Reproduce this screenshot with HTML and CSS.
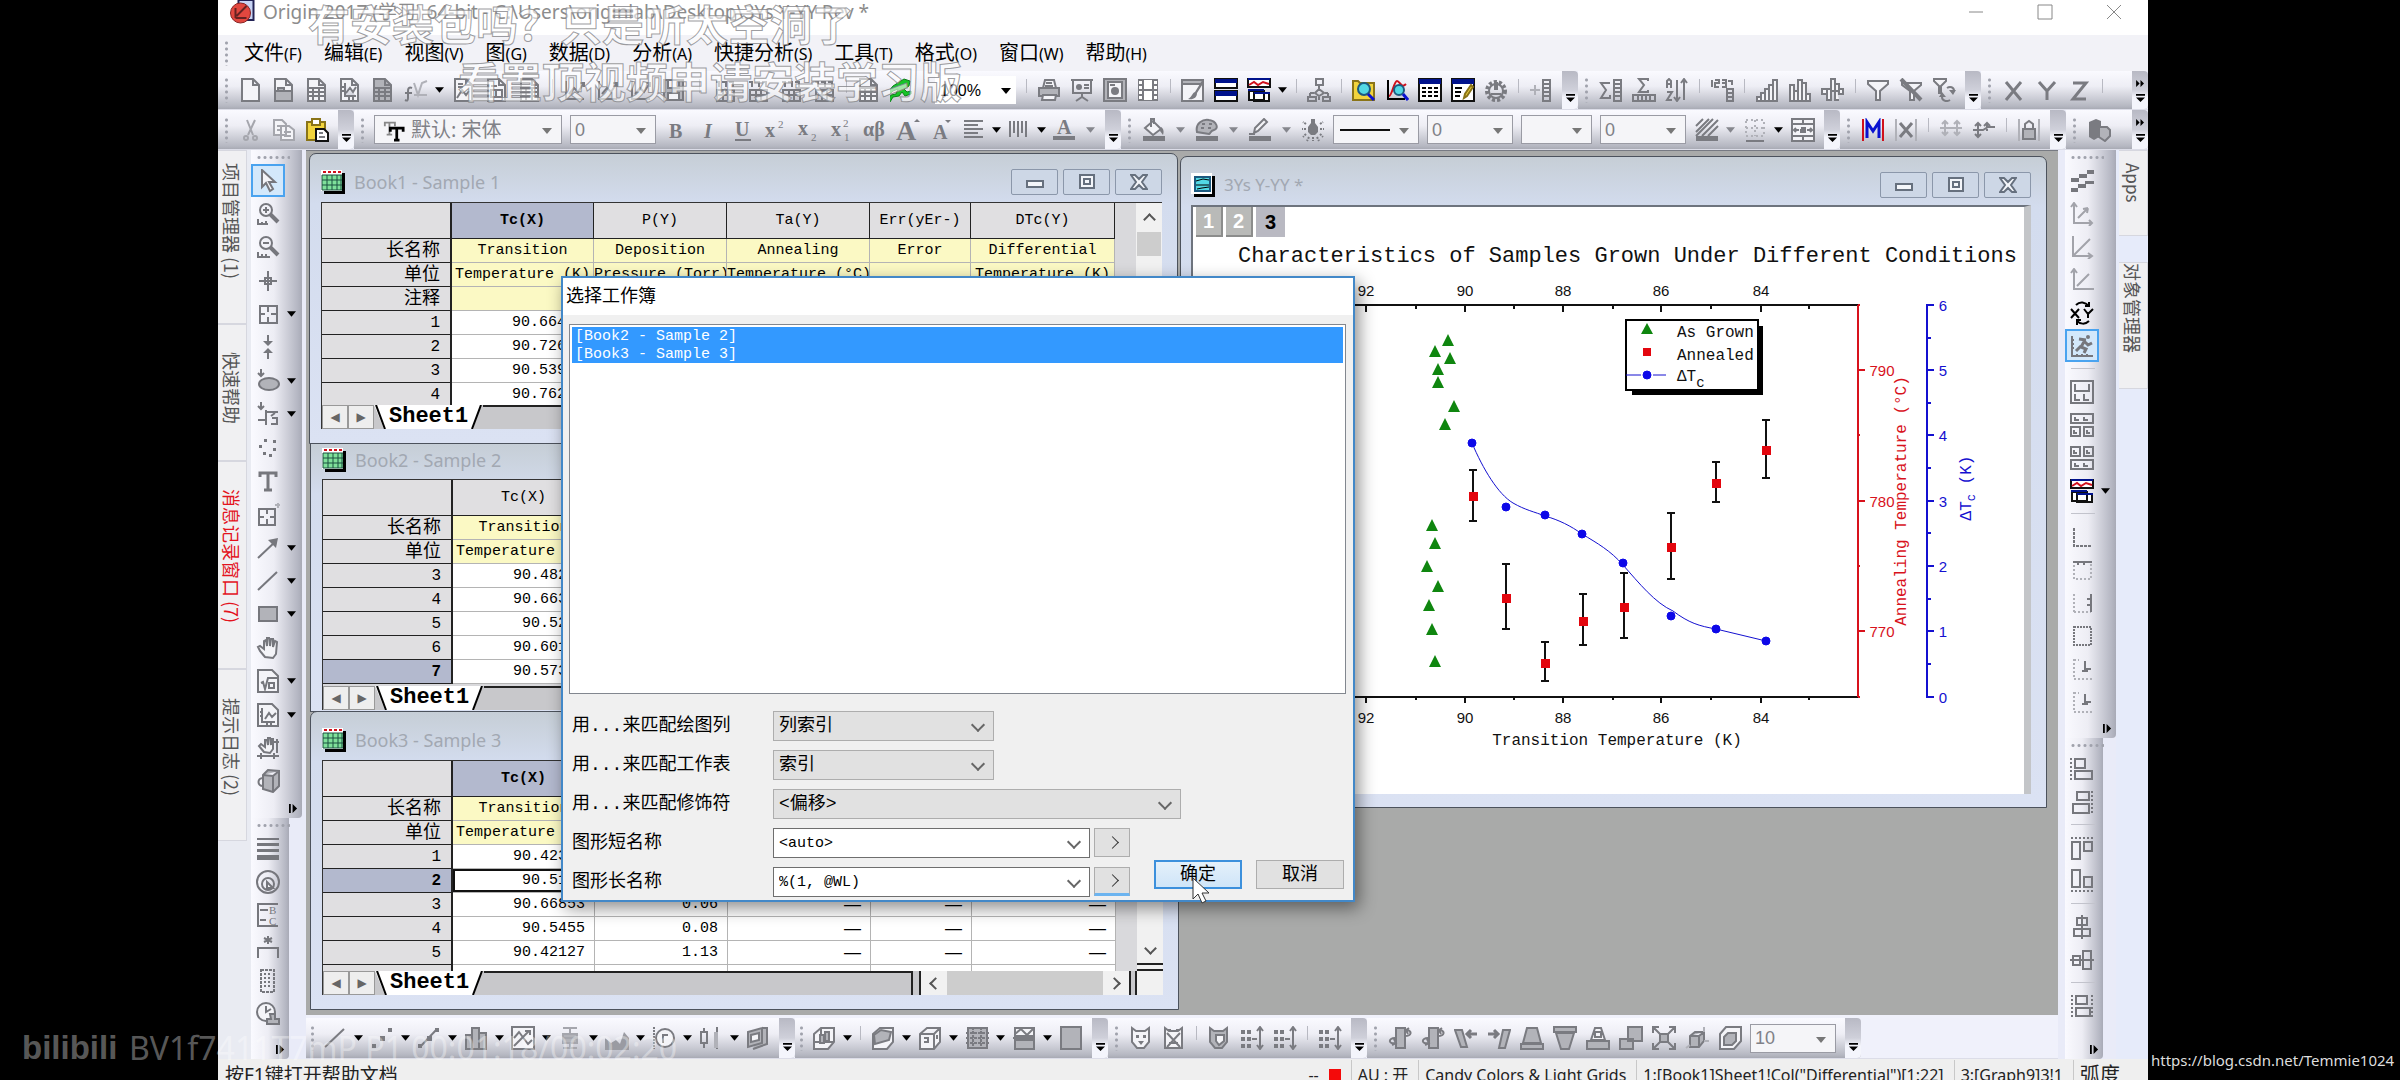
FILE: index.html
```html
<!DOCTYPE html>
<html lang="zh-CN">
<head>
<meta charset="utf-8">
<title>Origin 2017</title>
<link rel="stylesheet" href="styles.css">
</head>
<body>
<svg class="defs" aria-hidden="true">
<defs>
<symbol id="new" viewBox="0 0 24 24"><path class="w" d="M3 1h11l6 6v16H3zM14 1v6h6"/></symbol>
<symbol id="open" viewBox="0 0 24 24"><path class="w" d="M3 1h11l6 6v16H3zM14 1v6h6"/><path class="h" d="M3 13h17v10H3zM6 13v-3h6v3"/></symbol>
<symbol id="docgrid" viewBox="0 0 24 24"><path class="w" d="M3 1h11l6 6v16H3zM14 1v6h6M3 10h17M3 14h17M3 18h17M8 10v13M14 10v13"/></symbol>
<symbol id="docxls" viewBox="0 0 24 24"><path class="h" d="M3 1h11l6 6v16H3z"/><path d="M14 1v6h6M3 10h17M3 14h17M3 18h17M8 10v13M14 10v13"/></symbol>
<symbol id="docplot" viewBox="0 0 24 24"><path class="w" d="M3 1h11l6 6v16H3zM14 1v6h6M7 5v13h11M8 15l4-5 3 4 3-5M3 9h3M3 13h3M11 18v4M15 18v4"/></symbol>
<symbol id="func" viewBox="0 0 24 24"><path d="M8 10c-4-2-4 2-4 4v6c0 3-1 3-3 2M1 15h7"/><path class="l" d="M10 5l4 12 4-12 5-2M10 17h13"/></symbol>
<symbol id="docimg" viewBox="0 0 24 24"><path class="w" d="M3 1h11l6 6v16H3zM14 1v6h6M5 20l5-8 4 5 3-4M6 6h5M6 9h5"/></symbol>
<symbol id="docmulti" viewBox="0 0 24 24"><path class="w" d="M3 1h11l6 6v16H3zM14 1v6h6M6 12h11v7H6zM6 8h6M11 12v7"/></symbol>
<symbol id="save" viewBox="0 0 24 24"><path class="h" d="M2 2h19v20H2z"/><path class="w" d="M6 2h11v8H6zM6 15h11v7H6z"/></symbol>
<symbol id="chartimp" viewBox="0 0 24 24"><path d="M3 3v18h18M6 16l5-6 4 4 6-9M17 5h4v4"/></symbol>
<symbol id="nums" viewBox="0 0 24 24"><path d="M4 12h17v11H4zM4 17h17M10 12v11M15 12v11M3 4h3v5M9 4h4v5M16 4h4v5"/></symbol>
<symbol id="run" viewBox="0 0 24 24"><path class="g" d="M14 1l6 2-1 5-5 3 3 3 4-1v3l-6 2-3-4-3 4-6 1-3 5-2-2 3-5 5-1 2-5-5 2-3 3-2-2 5-6z"/></symbol>
<symbol id="print" viewBox="0 0 24 24"><path class="h" d="M2 10h20v8H2z"/><path class="w" d="M6 10l2-8h9l2 8zM6 17h13l-1 5H5z"/><path d="M9 5h6M8 8h8"/></symbol>
<symbol id="present" viewBox="0 0 24 24"><path d="M1 2h22M3 3v12h18V3M12 15v5M6 23l6-4 6 4M14 7h5M14 10h5"/><circle class="f" cx="9" cy="9" r="3"/></symbol>
<symbol id="docpie" viewBox="0 0 24 24"><path class="h" d="M1 1h22v22H1z"/><path class="w" d="M5 4h14v16H5z"/><circle class="f" cx="12" cy="13" r="4"/><path d="M7 7h5"/></symbol>
<symbol id="film" viewBox="0 0 24 24"><path class="f" d="M2 1h20v22H2z"/><path class="wf" d="M8 2h8v9H8zM8 13h8v9H8zM3 3h3v3H3zM3 8h3v3H3zM3 13h3v3H3zM3 18h3v3H3zM18 3h3v3h-3zM18 8h3v3h-3zM18 13h3v3h-3zM18 18h3v3h-3z"/></symbol>
<symbol id="brush" viewBox="0 0 24 24"><path class="w" d="M1 2h21v21H1z"/><path class="h" d="M1 2h21v4H1z"/><path class="f" d="M22 1l-8 13c-3 1-3 5-7 7 5 1 9-1 9-6l7-11z"/></symbol>
<symbol id="split" viewBox="0 0 24 24"><path class="wk" d="M1 1h22v9H1zM1 13h22v10H1z"/><path class="bf" d="M1 1h22v4H1zM1 13h22v5H1z"/></symbol>
<symbol id="cascade" viewBox="0 0 24 24"><path class="wk" d="M1 1h22v8H1zM2 13h15v9H2zM7 15h15v8H7z"/><path class="bf" d="M1 0h22v2H1zM1 11h16v2H1zM7 14h16v2H7z"/><path class="r" d="M2 7l5-3 4 3 5-3 6 2"/></symbol>
<symbol id="tree" viewBox="0 0 24 24"><path d="M9 1h7v6H9zM12 7v4M8 15l4-4 5 4-5 3zM3 15h4M18 15h3M3 15v4M21 15v4M1 19h8v4H1zM16 19h7v4h-7zM12 18v4"/></symbol>
<symbol id="findfile" viewBox="0 0 24 24"><path class="y" d="M1 3h5l2 2h14v17H1z"/><circle class="c" cx="12" cy="11" r="6"/><path class="b" d="M16 16l6 6"/></symbol>
<symbol id="findplot" viewBox="0 0 24 24"><path class="k" d="M3 2v19h17"/><path class="r" d="M4 18c3 0 5-15 8-15s4 8 9 3"/><circle class="c" cx="14" cy="12" r="5"/><path class="b" d="M18 16l5 6"/></symbol>
<symbol id="tablewin" viewBox="0 0 24 24"><path class="wk" d="M1 1h22v22H1z"/><path class="bf" d="M1 1h22v5H1z"/><path class="k" d="M4 10h4M10 10h4M16 10h4M4 14h4M10 14h4M16 14h4M4 18h4M10 18h4M16 18h4"/></symbol>
<symbol id="notewin" viewBox="0 0 24 24"><path class="wk" d="M1 1h22v22H1z"/><path class="bf" d="M1 1h22v5H1z"/><path class="k" d="M4 10h7M4 14h6M4 18h5"/><path class="y" d="M13 20l1-4 6-9 2 2-6 9z"/></symbol>
<symbol id="gear" viewBox="0 0 24 24"><circle cx="12" cy="13" r="9" stroke-width="4" stroke-dasharray="3 2"/><circle cx="12" cy="13" r="7"/><path class="f" d="M10 4h4v8h-4z"/><path d="M7 16h10"/></symbol>
<symbol id="addcol" viewBox="0 0 24 24"><path class="l" d="M1 12h10M6 7v10"/><path d="M14 2h7v21h-7zM14 6h7M14 10h7M14 14h7M14 18h7"/></symbol>
<symbol id="sumcol" viewBox="0 0 24 24"><path d="M11 5H2l5 7-5 8h9v-3M15 2h7v21h-7zM15 6h7M15 10h7M15 14h7M15 18h7"/></symbol>
<symbol id="sumrow" viewBox="0 0 24 24"><path d="M16 3V1H7l5 6-5 7h9v-2M1 17h22v6H1zM6 17v6M10 17v6M14 17v6M18 17v6"/></symbol>
<symbol id="sort" viewBox="0 0 24 24"><path d="M2 10V3l2-2 2 2v7M2 6h4M2 14h5l-5 8h5M12 2v20M9 19l3 4 3-4M19 22V2M16 5l3-4 3 4"/></symbol>
<symbol id="setnum" viewBox="0 0 24 24"><path d="M2 2v7M5 2h4v3H5v4h4M12 2h4v7h-4M12 5h3M18 3h4v4M17 11h6v12h-6zM17 15h6M17 19h6"/></symbol>
<symbol id="bars1" viewBox="0 0 24 24"><path class="w" d="M2 19h4v4H2zM6 15h4v8H6zM10 11h4v12h-4zM14 7h4v16h-4zM18 2h4v21h-4z"/></symbol>
<symbol id="bars2" viewBox="0 0 24 24"><path class="w" d="M2 7h4v16H2zM6 13h4v10H6zM10 2h4v21h-4zM14 5h4v18h-4zM18 16h4v7h-4z"/></symbol>
<symbol id="bars3" viewBox="0 0 24 24"><path class="w" d="M1 11h5v5H1zM6 11h4v11H6zM10 1h4v12h-4zM14 6h4v7h-4v9h4M18 11h4v5h-4z"/></symbol>
<symbol id="filter" viewBox="0 0 24 24"><path class="w" d="M2 3h20v3l-8 7v9h-4v-9L2 6z"/></symbol>
<symbol id="nofilter" viewBox="0 0 24 24"><path class="w" d="M3 5h19v2l-7 6v9h-4v-9L3 7z"/><path stroke-width="4" d="M2 1l20 21"/></symbol>
<symbol id="refilter" viewBox="0 0 24 24"><path class="w" d="M2 1h12v2L9 8v7H7V8L2 3z"/><path d="M22 13c0-4-4-5-7-3M10 19c0 4 5 5 8 3"/><path class="f" d="M17 12h7l-3 5zM7 19h7l-4-5z"/></symbol>
<symbol id="ex" viewBox="0 0 24 24"><path stroke-width="3" d="M4 4l15 18M19 4L4 22"/></symbol>
<symbol id="why" viewBox="0 0 24 24"><path stroke-width="3" d="M4 4l8 9 8-9M12 13v9"/></symbol>
<symbol id="zed" viewBox="0 0 24 24"><path stroke-width="3" d="M5 5h13L5 21h13"/></symbol>
<symbol id="cut" viewBox="0 0 24 24"><path d="M8 2l6 15M16 2L9 17"/><circle cx="7" cy="20" r="2"/><circle cx="16" cy="20" r="2"/></symbol>
<symbol id="copy" viewBox="0 0 24 24"><path class="w" d="M2 2h8l4 4v11H2zM9 8h8l5 4v10H9zM12 14h7M12 18h7M5 8h3M5 12h3"/></symbol>
<symbol id="paste" viewBox="0 0 24 24"><path class="y" d="M2 4h18v18H2z"/><path class="ybox" d="M7 1h8v6H7z"/><path class="wk" d="M11 11h8l4 4v8H11z"/><path d="M14 15h4M14 19h6"/></symbol>
<symbol id="bold" viewBox="0 0 24 24"><text class="ic fb" x="4" y="20">B</text></symbol>
<symbol id="ital" viewBox="0 0 24 24"><text class="ic fi" x="6" y="20">I</text></symbol>
<symbol id="undl" viewBox="0 0 24 24"><text class="ic fb" x="4" y="18">U</text><path d="M4 22h16"/></symbol>
<symbol id="sup" viewBox="0 0 24 24"><text class="ic fb" x="1" y="19">x</text><text class="ic s" x="14" y="10">2</text></symbol>
<symbol id="sub" viewBox="0 0 24 24"><text class="ic fb" x="1" y="17">x</text><text class="ic s" x="14" y="23">2</text></symbol>
<symbol id="supsub" viewBox="0 0 24 24"><text class="ic fb" x="1" y="18">x</text><text class="ic s" x="13" y="9">2</text><text class="ic s" x="14" y="23">1</text></symbol>
<symbol id="alpha" viewBox="0 0 24 24"><text class="ic fb" x="0" y="18">αβ</text></symbol>
<symbol id="bigA" viewBox="0 0 24 24"><text class="ic xl" x="0" y="22">A</text><path class="f" d="M18 4l3-3 3 3z"/></symbol>
<symbol id="smallA" viewBox="0 0 24 24"><text class="ic fb" x="4" y="21">A</text><path class="f" d="M16 2h6l-3 3z"/></symbol>
<symbol id="align" viewBox="0 0 24 24"><path d="M2 3h19M2 7h14M2 11h19M2 15h14M2 19h19"/></symbol>
<symbol id="vlines" viewBox="0 0 24 24"><path d="M3 3v16M7 3v12M11 3v16M15 3v12M19 3v16"/></symbol>
<symbol id="colorA" viewBox="0 0 24 24"><text class="ic fb" x="5" y="16">A</text><path class="f" d="M1 18h22v4H1z"/></symbol>
<symbol id="bucket" viewBox="0 0 24 24"><path class="w" d="M3 10l8-7 8 8-8 6zM9 9V1h3v5"/><path class="f" d="M19 9c3 2 3 5 2 8l-3-4zM1 18h22v5H1z"/></symbol>
<symbol id="palette" viewBox="0 0 24 24"><path class="h" d="M2 14C0 5 8 1 14 2c8 1 10 9 5 10-4 1-3 3-5 4z"/><path d="M7 6h3M14 6h3M6 10h3M13 10h3"/><path class="f" d="M1 18h22v5H1z"/></symbol>
<symbol id="pen" viewBox="0 0 24 24"><path class="w" d="M6 15l1-5 9-9 3 3-9 9zM1 16h6"/><path class="f" d="M1 18h22v5H1z"/></symbol>
<symbol id="bulb" viewBox="0 0 24 24"><path class="f" d="M10 1h4v4l3 4v5l-3 3h-4l-3-3V9l3-4z"/><path stroke-dasharray="2 1" d="M5 11H1M19 11h4M5 6L2 4M19 6l3-2M5 16l-3 3M19 16l3 3M12 19v4M8 19l-2 4M16 19l2 4"/></symbol>
<symbol id="hatch" viewBox="0 0 24 24"><path d="M1 8l7-7M1 14L14 1M1 18L18 1M7 18L23 2M13 18L23 8"/><path class="f" d="M1 18h22v5H1z"/></symbol>
<symbol id="border" viewBox="0 0 24 24"><path class="l" stroke-dasharray="2 3" d="M3 2h18v16H3zM12 2v16M3 10h18"/><path d="M3 23h18"/></symbol>
<symbol id="merge" viewBox="0 0 24 24"><path class="w" d="M1 1h22v22H1zM1 6h22M1 18h22M12 1v5M12 18v5M3 12h5M16 12h5M5 10l-2 2 2 2M19 10l2 2-2 2M10 10h4v4h-4v-2h4"/></symbol>
<symbol id="mask" viewBox="0 0 24 24"><path class="r" d="M2 1v22M22 1v22"/><path class="b" d="M6 20V4l6 9 6-9v16"/></symbol>
<symbol id="unmask" viewBox="0 0 24 24"><path class="l" d="M2 1v22M22 1v22"/><path stroke-width="3" d="M6 5l12 14M18 5L6 19"/></symbol>
<symbol id="swap" viewBox="0 0 24 24"><path class="l" d="M6 3v14M3 6l3-3 3 3M3 14l3 3 3-3M1 10h22M18 3v14M15 6l3-3 3 3M15 14l3 3 3-3"/></symbol>
<symbol id="swap2" viewBox="0 0 24 24"><path d="M6 5v14M3 8l3-3 3 3M3 16l3 3 3-3M1 12h10l5-3h7M15 6v7M12 8l3-3 3 3"/></symbol>
<symbol id="lock" viewBox="0 0 24 24"><path class="l" d="M2 1v22M22 1v22"/><path class="h" d="M6 11h12v10H6z"/><path d="M8 11V6l4-3 4 3v5"/></symbol>
<symbol id="cubes" viewBox="0 0 24 24"><path class="f" d="M2 4l7-3 5 2v15l-7 4-5-3z"/><path class="h" d="M12 9h8l3 3v6l-5 5-6-4z"/></symbol>
<symbol id="arrow" viewBox="0 0 24 24"><path class="w" d="M6 1v17l4-4 4 8 3-2-4-7h6z"/></symbol>
<symbol id="zin" viewBox="0 0 24 24"><circle cx="10" cy="8" r="6"/><path d="M7 8h6M10 5v6M2 17v5h10M6 20v2M10 19v3"/><path stroke-width="4" d="M14 12l8 8"/></symbol>
<symbol id="zout" viewBox="0 0 24 24"><circle cx="10" cy="8" r="6"/><path d="M7 8h6M2 17v5h12M6 19v3M10 19v3"/><path stroke-width="4" d="M14 12l8 8"/></symbol>
<symbol id="cross" viewBox="0 0 24 24"><path d="M12 2v20M3 12h18M9 9h6v6H9z"/></symbol>
<symbol id="screen" viewBox="0 0 24 24"><path d="M4 4h17v17H4zM12 4v6M12 15v6M4 12h5M15 12h6"/></symbol>
<symbol id="dsel" viewBox="0 0 24 24"><path d="M12 0v8M12 24v-8"/><path class="f" d="M7 6h10l-5 5zM7 18h10l-5-5z"/></symbol>
<symbol id="oval" viewBox="0 0 24 24"><path d="M5 0v6M2 4l3 3 3-3"/><ellipse class="h" cx="13" cy="15" rx="10" ry="6"/></symbol>
<symbol id="reg" viewBox="0 0 24 24"><path d="M5 0v6M2 4l3 3 3-3M10 8v15M2 18h8M10 10h12M15 14l4-3M15 22h6v-6h-5"/></symbol>
<symbol id="dots" viewBox="0 0 24 24"><path class="f" d="M8 3h3v3H8zM3 9h3v3H3zM17 4h3v3h-3zM17 12h3v3h-3zM7 16h3v3H7zM13 18h3v3h-3z"/></symbol>
<symbol id="tee" viewBox="0 0 24 24"><path stroke-width="3" d="M4 8V4h16v4M12 4v17M8 21h8"/></symbol>
<symbol id="annot" viewBox="0 0 24 24"><path d="M3 7h16v16H3zM11 7v5M11 17v6M3 15h5M14 15h5"/><path class="l" d="M22 1v5M19 3h5"/></symbol>
<symbol id="arr" viewBox="0 0 24 24"><path d="M2 22L20 5"/><path class="f" d="M12 4l10-2-2 10z"/></symbol>
<symbol id="line" viewBox="0 0 24 24"><path d="M2 21L21 3"/></symbol>
<symbol id="rect" viewBox="0 0 24 24"><path class="h" d="M3 5h18v14H3z"/></symbol>
<symbol id="hand" viewBox="0 0 24 24"><path class="w" d="M9 21l-5-6-2-4 2-1 4 3V5l2-1 1 6V2h2l1 8 1-7h2v8l2-6 2 1-1 12-3 4z"/></symbol>
<symbol id="sqrt" viewBox="0 0 24 24"><path class="w" d="M2 1h14l6 6v16H2z"/><path d="M5 14l2-1 2 7 3-11h9M13 14h5v5h-5z"/></symbol>
<symbol id="gobj" viewBox="0 0 24 24"><path class="w" d="M2 1h14l6 6v16H2z"/><path d="M6 5v14h13M9 16l4-6 3 4 4-4M4 9h2M4 13h2M11 19v3M15 19v3"/></symbol>
<symbol id="hand2" viewBox="0 0 24 24"><path class="w" d="M8 16l-5-6 2-2 4 3V4h2l1 5V2h2l1 7V3h2v10l-3 4z"/><path d="M1 20h22M5 17v6M18 17v6M21 3v14M18 6h5"/></symbol>
<symbol id="cube" viewBox="0 0 24 24"><path class="h" d="M7 6l5-5 11 1v15l-6 6-10-3zM7 6l10 1 6-5M17 7v16"/><path d="M7 9c-6 0-6 8 0 8"/></symbol>
<symbol id="hlines" viewBox="0 0 24 24"><path class="f" d="M1 1h22v2H1zM1 6h22v3H1zM1 12h22v3H1zM1 18h22v5H1z"/></symbol>
<symbol id="target" viewBox="0 0 24 24"><circle cx="12" cy="12" r="11"/><circle cx="12" cy="14" r="6"/><path class="w" d="M11 12v6h6z"/></symbol>
<symbol id="bc" viewBox="0 0 24 24"><path d="M22 1H2v22h20M4 7h8M4 17h6"/><text class="ic s" x="13" y="11">B</text><text class="ic s" x="13" y="22">C</text></symbol>
<symbol id="starb" viewBox="0 0 24 24"><path d="M12 0v8M8 2l8 4M16 2L8 6M2 22V12h20v10"/></symbol>
<symbol id="dotbox" viewBox="0 0 24 24"><path stroke-dasharray="3 1" d="M5 1h13v22H5z"/><path stroke-dasharray="2 2" d="M9 4v16M13 4v16"/></symbol>
<symbol id="clock" viewBox="0 0 24 24"><circle class="w" cx="10" cy="10" r="9"/><path d="M10 4v6l5-3"/><path class="h" d="M14 12h5v5h4v5H11v-5h4z"/></symbol>
<symbol id="stairs" viewBox="0 0 24 24"><path class="f" d="M17 1h7v4h-7zM9 5h8v4H9zM1 9h8v4H1zM15 12h9v3h-9zM8 15h8v4H8zM1 19h7v4H1z"/></symbol>
<symbol id="ax1" viewBox="0 0 24 24"><path d="M4 2v19h18M1 5l3-4 3 4M19 18l3 3-3 3M8 16L18 6M18 6l-5 1M18 6l-1 5"/></symbol>
<symbol id="ax2" viewBox="0 0 24 24"><path d="M3 1v20h18M3 21L20 4M18 18l4 3-4 3"/></symbol>
<symbol id="ax3" viewBox="0 0 24 24"><path d="M4 2v19h20M1 5l3-4 3 4M7 18L19 6"/></symbol>
<symbol id="xy" viewBox="0 0 24 24"><path class="k" d="M1 8l8 9M9 8l-8 9M14 8l4 5 5-5M18 13v4M6 4c4-4 9-3 13 1M19 1v4h-4M19 20c-4 4-9 3-12 0M7 24v-5h4"/></symbol>
<symbol id="runner" viewBox="0 0 24 24"><path d="M2 2v20h21M2 6h2M2 10h2M2 14h2M7 22v-2M12 22v-2M17 22v-2"/><circle class="f" cx="18" cy="3" r="2"/><path stroke-width="3" d="M9 5l7 1M15 6l-4 7 5 2-2 4M11 12l-5 5M15 8l3 3 4-2"/></symbol>
<symbol id="lay1" viewBox="0 0 24 24"><path d="M1 1h22v22H1zM5 4v7h14V4M5 14v6h5M14 14v6h5"/></symbol>
<symbol id="lay2" viewBox="0 0 24 24"><path d="M1 1h22v9H1zM1 14h9v9H1zM14 14h9v9h-9zM5 4v3h4M14 4v3h4M4 17v3h3M17 17v3h3"/></symbol>
<symbol id="lay3" viewBox="0 0 24 24"><path d="M1 1h9v9H1zM14 1h9v9h-9zM1 14h22v9H1zM4 4v3h3M17 4v3h3M5 17v3h4M14 17v3h4"/></symbol>
<symbol id="corner" viewBox="0 0 24 24"><path stroke-dasharray="3 1" d="M4 3v18h18"/></symbol>
<symbol id="cortop" viewBox="0 0 24 24"><path class="l" stroke-dasharray="2 2" d="M4 3v18h17V3"/><path d="M3 4h19M8 4v3M14 4v3"/></symbol>
<symbol id="corright" viewBox="0 0 24 24"><path class="l" stroke-dasharray="2 2" d="M4 3v18M4 21h17"/><path d="M21 3v18M17 8h4M17 14h4"/></symbol>
<symbol id="corbox" viewBox="0 0 24 24"><path stroke-dasharray="2 1" d="M4 3h17v18H4z"/></symbol>
<symbol id="corin" viewBox="0 0 24 24"><path class="l" stroke-dasharray="2 2" d="M4 2v20h18M4 3h5"/><path d="M15 4v8h6M12 14h6"/></symbol>
<symbol id="al1" viewBox="0 0 24 24"><path d="M5 2h10v9H5zM5 14h17v8H5z"/><path stroke-dasharray="2 2" d="M1 1v22"/></symbol>
<symbol id="al2" viewBox="0 0 24 24"><path d="M7 2h12v8H7zM3 14h16v9H3z"/><path stroke-dasharray="2 2" d="M22 1v22"/></symbol>
<symbol id="al3" viewBox="0 0 24 24"><path d="M2 6h8v17H2zM14 6h8v9h-8z"/><path stroke-dasharray="2 2" d="M1 2h22"/></symbol>
<symbol id="al4" viewBox="0 0 24 24"><path d="M2 1h8v17H2zM14 8h8v10h-8z"/><path stroke-dasharray="2 2" d="M1 22h22"/></symbol>
<symbol id="al5" viewBox="0 0 24 24"><path d="M7 3h10v7H7zM4 14h16v7H4zM12 0v24"/></symbol>
<symbol id="al6" viewBox="0 0 24 24"><path d="M3 8h7v9H3zM13 3h8v18h-8zM0 12h24"/></symbol>
<symbol id="al7" viewBox="0 0 24 24"><path d="M6 2h11v8H6zM6 14h14v8H6z"/><path stroke-dasharray="2 2" d="M2 1v22M22 1v22"/></symbol>
<symbol id="scat" viewBox="0 0 24 24"><path class="f" d="M2 18h4v4H2zM10 10h5v5h-5zM18 2h4v4h-4z"/></symbol>
<symbol id="linesym" viewBox="0 0 24 24"><path d="M3 21L20 3"/><path class="f" d="M1 18h4v4H1zM10 10h5v5h-5zM18 2h4v4h-4z"/></symbol>
<symbol id="cols" viewBox="0 0 24 24"><path class="h" d="M2 9h6v14H2zM8 2h7v21H8zM15 7h7v16h-7z"/></symbol>
<symbol id="multi" viewBox="0 0 24 24"><path class="w" d="M1 1h22v22H1z"/><path d="M3 12l5-6 9 12 4-4M3 20L18 5M14 5h5v4"/></symbol>
<symbol id="box" viewBox="0 0 24 24"><path class="h" d="M5 8h14v9H5z"/><path d="M5 2h14M12 2v6M12 17v5M5 22h14M5 12h14"/></symbol>
<symbol id="area" viewBox="0 0 24 24"><path class="hf" d="M0 24V12l6 5 5-3 4 4 4-12 5 6v12z"/></symbol>
<symbol id="polar" viewBox="0 0 24 24"><circle class="w" cx="13" cy="12" r="9"/><path stroke-dasharray="2 1" d="M2 1v22"/><path d="M11 17V9h5"/></symbol>
<symbol id="stock" viewBox="0 0 24 24"><path d="M5 2v4M2 6h6v11H2zM5 17v5M18 1v22"/><path class="l" stroke-width="4" d="M17 6v16"/></symbol>
<symbol id="tmpl" viewBox="0 0 24 24"><path class="h" d="M2 6l14-4v15L2 21zM16 2h5v16l-14 5"/><path class="w" d="M5 9l8-2v7l-8 2z"/></symbol>
<symbol id="c3d" viewBox="0 0 24 24"><path class="w" d="M2 8l7-6h13v14l-6 7H2zM9 2v14H2M9 16h13"/><path class="h" d="M8 9h4v8H8zM13 6h4v9h-4z"/></symbol>
<symbol id="surf" viewBox="0 0 24 24"><path class="w" d="M2 8l7-6h13v14l-6 7H2z"/><path class="h" d="M3 9l7-5 10 2-2 8-14 4z"/></symbol>
<symbol id="p3d" viewBox="0 0 24 24"><path class="w" d="M2 8l7-6h13v14l-6 7H2zM2 8h14l6-6M16 8v15M6 12h4v4H6M19 9v4"/></symbol>
<symbol id="cont" viewBox="0 0 24 24"><path class="h" d="M3 2h19v20H3z"/><path stroke-dasharray="3 1" d="M1 7h23M1 12h23M1 17h23M8 1v22M16 1v22"/></symbol>
<symbol id="prof" viewBox="0 0 24 24"><path class="w" d="M3 2h19v8H3z"/><path class="h" d="M3 14h19v9H3z"/><path d="M3 8l6-5 6 6 6-6M1 12h22"/></symbol>
<symbol id="imgp" viewBox="0 0 24 24"><path class="h" d="M2 1h20v22H2z"/></symbol>
<symbol id="shield" viewBox="0 0 24 24"><path class="w" d="M3 2l4 3h9l4-3v14l-5 6H8l-5-6z"/><path class="f" d="M7 9h3v3H7zM14 9h3v3h-3zM9 15h6l-3 4z"/></symbol>
<symbol id="shx" viewBox="0 0 24 24"><path class="w" d="M3 2l4 3h9l4-3v20H3z"/><path d="M5 7l13 14M18 7L5 21M6 4h3M14 4h3M7 17h9"/></symbol>
<symbol id="shf" viewBox="0 0 24 24"><path class="h" d="M3 2l4 3h9l4-3v14l-5 6H8l-5-6z"/><path class="w" d="M9 9h8v6l-5 4-3-4z"/></symbol>
<symbol id="rngs" viewBox="0 0 24 24"><path class="f" d="M1 4h4v4H1zM7 4h4v4H7zM1 11h4v4H1zM7 11h4v4H7zM1 18h4v4H1zM7 18h4v4H7z"/><path d="M12 13h5M20 2v20M17 5l3-4 3 4M17 19l3 4 3-4"/></symbol>
<symbol id="rotl" viewBox="0 0 24 24"><path class="h" d="M8 2h9v20H8z"/><path d="M8 17c-8 2-8-5-1-5M4 19l4-2-2-4M17 10c7 0 7-5 2-6M21 2l-3 2 2 4"/></symbol>
<symbol id="skew" viewBox="0 0 24 24"><path class="h" d="M1 4h7l5 17H7z"/><path stroke-width="3" d="M13 8h10M17 4l-4 4 4 4"/></symbol>
<symbol id="skewr" viewBox="0 0 24 24"><path class="h" d="M16 4h7l-5 18h-6z"/><path stroke-width="3" d="M1 8h10M7 4l4 4-4 4"/></symbol>
<symbol id="trap" viewBox="0 0 24 24"><path class="h" d="M7 2h10l4 15H3zM1 18h22v5H1z"/></symbol>
<symbol id="trapd" viewBox="0 0 24 24"><path class="h" d="M1 1h22v5H1zM3 7h18l-5 16H8z"/></symbol>
<symbol id="trapb" viewBox="0 0 24 24"><path class="w" d="M9 2h6l4 12H5zM9 6h6v5H9z"/><path class="h" d="M1 15h22v8H1z"/></symbol>
<symbol id="sq2" viewBox="0 0 24 24"><path class="h" d="M9 1h14v14H9zM1 13h13v10H1z"/></symbol>
<symbol id="expand" viewBox="0 0 24 24"><path class="h" d="M8 8h8v8H8z"/><path d="M2 2l6 6M22 2l-6 6M2 22l6-6M22 22l-6-6M1 7V1h6M17 1h6v6M1 17v6h6M17 23h6v-6"/></symbol>
<symbol id="cub" viewBox="0 0 24 24"><path class="h" d="M5 10l5-4h9v9l-5 6H5zM5 10h9l5-4M14 10v11"/><path class="l" d="M19 1v5M1 22l4-3M19 15h5"/></symbol>
<symbol id="cub2" viewBox="0 0 24 24"><path class="w" d="M2 8l6-7h15v14l-7 8H2z"/><path class="h" d="M6 11l4-4h8v8l-4 4H6z"/></symbol>
<symbol id="book" viewBox="0 0 24 24"><path class="kf" d="M3 3h21v21H3z"/><path class="wf" d="M0 0h21v21H0z"/><path class="gl" d="M1 5h20v15H1z"/><path class="gg" d="M1 5h20M1 10h20M1 15h20M1 20h20M1 5v15M6 5v15M11 5v15M16 5v15M20 5v15"/><path class="r" stroke-dasharray="3 2" d="M2 2h18"/></symbol>
<symbol id="graph" viewBox="0 0 24 24"><path class="kf" d="M3 3h21v21H3z"/><path class="wf" d="M0 0h21v21H0z"/><path class="c" d="M4 4h15v14H4z"/><path class="k" stroke-width="1" d="M5 8l7-2 6 1M5 12h13M6 16l5-1 7-1"/></symbol>
<symbol id="dd" viewBox="0 0 10 6"><path class="f" stroke="none" d="M0 0h10L5 6z"/></symbol>
<symbol id="ovf" viewBox="0 0 10 10"><path class="f" stroke="none" d="M0 0h10v2H0zM0 4h10L5 9z"/></symbol>
<symbol id="chev" viewBox="0 0 10 8"><path class="f" stroke="none" d="M0 0l4 4-4 4zM5 0l4 4-4 4z"/></symbol>
<symbol id="ovs" viewBox="0 0 10 10"><path class="f" stroke="none" d="M0 0h2v10H0zM4 0l5 5-5 5z"/></symbol>
</defs>
</svg>

<div class="screen">
<div class="gutter"></div>
<main class="app">
<header class="title">
<svg class="logo" viewBox="0 0 24 24"><path d="M8 0h15v20H8z" fill="#c8d4f4" stroke="#225" stroke-width="2"/><circle cx="10" cy="13" r="10" fill="#e2473f" stroke="#822" stroke-width="1"/><path d="M5 18V8M5 18h11M6 16L16 6" stroke="#622" stroke-width="2"/></svg>
<h1>Origin 2017 (学习) 64-bit - C:\Users\originlab\Desktop\3Ys Y-YY Rev *</h1>
<div class="winctl"><button><svg viewBox="0 0 16 16"><path d="M1 8h14"/></svg></button><button><svg viewBox="0 0 16 16"><path d="M1 1h14v14H1z"/></svg></button><button><svg viewBox="0 0 16 16"><path d="M1 1l14 14M15 1L1 15"/></svg></button></div>
</header>
<nav class="menu"><span class="grip"></span>
<button>文件<small>(F)</small></button><button>编辑<small>(E)</small></button><button>视图<small>(V)</small></button><button>图<small>(G)</small></button><button>数据<small>(D)</small></button><button>分析<small>(A)</small></button><button>快捷分析<small>(S)</small></button><button>工具<small>(T)</small></button><button>格式<small>(O)</small></button><button>窗口<small>(W)</small></button><button>帮助<small>(H)</small></button>
</nav>

<div class="bar">
<div class="seg"><span class="grip"></span>
<button class="b"><svg><use href="#new"/></svg></button><button class="b"><svg><use href="#open"/></svg></button><button class="b"><svg><use href="#docgrid"/></svg></button><button class="b"><svg><use href="#docplot"/></svg></button><button class="b"><svg><use href="#docxls"/></svg></button><button class="b"><svg><use href="#func"/></svg></button><button class="a k"><svg><use href="#dd"/></svg></button>
<button class="b"><svg><use href="#docimg"/></svg></button><button class="b"><svg><use href="#docmulti"/></svg></button><button class="b"><svg><use href="#docgrid"/></svg></button><i class="sep"></i>
<button class="b"><svg><use href="#chartimp"/></svg></button><button class="b"><svg><use href="#chartimp"/></svg></button><button class="b"><svg><use href="#chartimp"/></svg></button><button class="b"><svg><use href="#save"/></svg></button><i class="sep wide"></i>
<button class="b"><svg><use href="#nums"/></svg></button><button class="b"><svg><use href="#nums"/></svg></button><button class="b"><svg><use href="#nums"/></svg></button><button class="b"><svg><use href="#nums"/></svg></button><i class="sep"></i>
<button class="b"><svg><use href="#docgrid"/></svg></button><button class="b"><svg><use href="#run"/></svg></button><i class="sep"></i>
<label class="zoom"><select aria-label="缩放"><option>100%</option></select></label><i class="sep"></i>
<button class="b"><svg><use href="#print"/></svg></button><button class="b"><svg><use href="#present"/></svg></button><button class="b"><svg><use href="#docpie"/></svg></button><button class="b"><svg><use href="#film"/></svg></button><i class="sep"></i>
<button class="b"><svg><use href="#brush"/></svg></button><button class="b"><svg><use href="#split"/></svg></button><button class="b"><svg><use href="#cascade"/></svg></button><button class="a k"><svg><use href="#dd"/></svg></button><i class="sep"></i>
<button class="b"><svg><use href="#tree"/></svg></button><i class="sep"></i>
<button class="b"><svg><use href="#findfile"/></svg></button><button class="b"><svg><use href="#findplot"/></svg></button><button class="b"><svg><use href="#tablewin"/></svg></button><button class="b"><svg><use href="#notewin"/></svg></button><button class="b"><svg><use href="#gear"/></svg></button><i class="sep"></i>
<button class="b"><svg><use href="#addcol"/></svg></button><button class="o"><svg><use href="#ovf"/></svg></button></div>
<div class="seg"><span class="grip"></span>
<button class="b"><svg><use href="#sumcol"/></svg></button><button class="b"><svg><use href="#sumrow"/></svg></button><button class="b"><svg><use href="#sort"/></svg></button><i class="sep"></i><button class="b"><svg><use href="#setnum"/></svg></button><i class="sep"></i>
<button class="b"><svg><use href="#bars1"/></svg></button><button class="b"><svg><use href="#bars2"/></svg></button><button class="b"><svg><use href="#bars3"/></svg></button><i class="sep"></i>
<button class="b"><svg><use href="#filter"/></svg></button><button class="b"><svg><use href="#nofilter"/></svg></button><button class="b"><svg><use href="#refilter"/></svg></button><button class="o"><svg><use href="#ovf"/></svg></button></div>
<div class="seg fill"><span class="grip"></span>
<button class="b"><svg><use href="#ex"/></svg></button><button class="b"><svg><use href="#why"/></svg></button><button class="b"><svg><use href="#zed"/></svg></button><i class="sep"></i><button class="o end"><svg class="cv"><use href="#chev"/></svg><svg><use href="#ovf"/></svg></button></div>
</div>

<div class="bar">
<div class="seg"><span class="grip"></span>
<button class="b l"><svg><use href="#cut"/></svg></button><button class="b l"><svg><use href="#copy"/></svg></button><button class="b"><svg><use href="#paste"/></svg></button><button class="o"><svg><use href="#ovf"/></svg></button></div>
<div class="seg"><span class="grip"></span>
<label class="combo font"><svg class="tt" viewBox="0 0 24 24"><path d="M2 8V4h11v4M7 4v13M4 17h6" stroke="#888"/><path d="M8 14v-4h14v4M15 10v13M12 23h6" stroke="#000" stroke-width="3"/></svg><select aria-label="字体"><option>默认: 宋体</option></select></label>
<label class="combo size"><select aria-label="字号"><option>0</option></select></label>
<button class="b"><svg><use href="#bold"/></svg></button><button class="b"><svg><use href="#ital"/></svg></button><button class="b"><svg><use href="#undl"/></svg></button><button class="b"><svg><use href="#sup"/></svg></button><button class="b"><svg><use href="#sub"/></svg></button><button class="b"><svg><use href="#supsub"/></svg></button><button class="b"><svg><use href="#alpha"/></svg></button><button class="b"><svg><use href="#bigA"/></svg></button><button class="b"><svg><use href="#smallA"/></svg></button>
<button class="b"><svg><use href="#align"/></svg></button><button class="a k n"><svg><use href="#dd"/></svg></button><button class="b"><svg><use href="#vlines"/></svg></button><button class="a k n"><svg><use href="#dd"/></svg></button><button class="b"><svg><use href="#colorA"/></svg></button><button class="a w20"><svg><use href="#dd"/></svg></button><button class="o"><svg><use href="#ovf"/></svg></button></div>
<div class="seg"><span class="grip"></span>
<button class="b"><svg><use href="#bucket"/></svg></button><button class="a w20"><svg><use href="#dd"/></svg></button><button class="b"><svg><use href="#palette"/></svg></button><button class="a w20"><svg><use href="#dd"/></svg></button><button class="b"><svg><use href="#pen"/></svg></button><button class="a w20"><svg><use href="#dd"/></svg></button><button class="b"><svg><use href="#bulb"/></svg></button>
<label class="combo size dash"><select aria-label="线型"><option></option></select></label><label class="combo size"><select aria-label="线宽"><option>0</option></select></label><label class="combo fillc"><select aria-label="填充"><option></option></select></label><label class="combo size"><select aria-label="图案"><option>0</option></select></label>
<button class="b"><svg><use href="#hatch"/></svg></button><button class="a"><svg><use href="#dd"/></svg></button><button class="b"><svg><use href="#border"/></svg></button><button class="a k"><svg><use href="#dd"/></svg></button><button class="b"><svg><use href="#merge"/></svg></button><button class="o"><svg><use href="#ovf"/></svg></button></div>
<div class="seg"><span class="grip"></span>
<button class="b"><svg><use href="#mask"/></svg></button><button class="b"><svg><use href="#unmask"/></svg></button><i class="sep"></i><button class="b"><svg><use href="#swap"/></svg></button><button class="b"><svg><use href="#swap2"/></svg></button><i class="sep"></i><button class="b"><svg><use href="#lock"/></svg></button><button class="o"><svg><use href="#ovf"/></svg></button></div>
<div class="seg fill"><span class="grip"></span><button class="b"><svg><use href="#cubes"/></svg></button><button class="o end"><svg class="cv"><use href="#chev"/></svg><svg><use href="#ovf"/></svg></button></div>
</div>

<div class="mid">
<aside class="tabs">
<button class="t1">项目管理器 (1)</button><button class="t2">快速帮助</button><button class="t3">消息记录窗口 (7)</button><button class="t4">提示日志 (2)</button>
</aside>
<aside class="tools left">
<div class="pane"><span class="hgrip"></span>
<div class="stack">
<div><button class="v on"><svg><use href="#arrow"/></svg></button></div>
<div><button class="v"><svg><use href="#zin"/></svg></button></div>
<div><button class="v"><svg><use href="#zout"/></svg></button></div>
<div><button class="v"><svg><use href="#cross"/></svg></button></div>
<div><button class="v"><svg><use href="#screen"/></svg></button><button class="a k"><svg><use href="#dd"/></svg></button></div>
<div><button class="v"><svg><use href="#dsel"/></svg></button></div>
<div><button class="v"><svg><use href="#oval"/></svg></button><button class="a k"><svg><use href="#dd"/></svg></button></div>
<div><button class="v"><svg><use href="#reg"/></svg></button><button class="a k"><svg><use href="#dd"/></svg></button></div>
<div><button class="v"><svg><use href="#dots"/></svg></button></div>
<div><button class="v"><svg><use href="#tee"/></svg></button></div>
<div><button class="v"><svg><use href="#annot"/></svg></button></div>
<div><button class="v"><svg><use href="#arr"/></svg></button><button class="a k"><svg><use href="#dd"/></svg></button></div>
<div><button class="v"><svg><use href="#line"/></svg></button><button class="a k"><svg><use href="#dd"/></svg></button></div>
<div><button class="v"><svg><use href="#rect"/></svg></button><button class="a k"><svg><use href="#dd"/></svg></button></div>
<div><button class="v"><svg><use href="#hand"/></svg></button></div>
<div><button class="v"><svg><use href="#sqrt"/></svg></button><button class="a k"><svg><use href="#dd"/></svg></button></div>
<div><button class="v"><svg><use href="#gobj"/></svg></button><button class="a k"><svg><use href="#dd"/></svg></button></div>
<div><button class="v"><svg><use href="#hand2"/></svg></button></div>
<div><button class="v"><svg><use href="#cube"/></svg></button></div>
</div>
<button class="vo"><svg><use href="#ovs"/></svg></button></div>
<div class="pane narrow"><span class="hgrip"></span>
<button class="v"><svg><use href="#hlines"/></svg></button><button class="v"><svg><use href="#target"/></svg></button><button class="v"><svg><use href="#bc"/></svg></button><button class="v"><svg><use href="#starb"/></svg></button><button class="v"><svg><use href="#dotbox"/></svg></button><button class="v"><svg><use href="#clock"/></svg></button>
<button class="vo"><svg><use href="#ovs"/></svg></button></div>
</aside>

<section class="center">
<div class="mdi">

<article class="win book1">
<header class="wt"><svg><use href="#book"/></svg><h2>Book1 - Sample 1</h2><div class="wb"><button><svg viewBox="0 0 18 16"><path d="M1 7h16v6H1z"/></svg></button><button><svg viewBox="0 0 18 16"><path d="M2 1h14v13H2zM6 5h6v5H6z"/></svg></button><button><svg viewBox="0 0 18 16"><path d="M1 1h4l4 4 4-4h4l-5 7 5 7h-4l-4-4-4 4H1l5-7z"/></svg></button></div></header>
<div class="sheet">
<div class="grid">
<table>
<colgroup><col class="c0"><col class="c1"><col class="c2"><col class="c3"><col class="c4"><col class="c5"></colgroup>
<tr class="hd"><th></th><th class="sel">Tc(X)</th><th>P(Y)</th><th>Ta(Y)</th><th>Err(yEr-)</th><th>DTc(Y)</th></tr>
<tr class="y"><th>长名称</th><td>Transition</td><td>Deposition</td><td>Annealing</td><td>Error</td><td>Differential</td></tr>
<tr class="y"><th>单位</th><td>Temperature (K)</td><td>Pressure (Torr)</td><td>Temperature (°C)</td><td></td><td>Temperature (K)</td></tr>
<tr class="y"><th>注释</th><td></td><td></td><td></td><td></td><td></td></tr>
<tr><th>1</th><td>90.66412</td><td>0.05</td><td>794</td><td>2</td><td>—</td></tr>
<tr><th>2</th><td>90.72615</td><td>0.07</td><td>784</td><td>2</td><td>—</td></tr>
<tr><th>3</th><td>90.53928</td><td>0.09</td><td>781</td><td>3</td><td>—</td></tr>
<tr><th>4</th><td>90.76235</td><td>0.11</td><td>776</td><td>3</td><td>—</td></tr>
</table>
<div class="gap"></div>
<div class="vs"><i class="up"></i><i class="thumb"></i></div>
</div>
<div class="strip"><button class="nv">◀</button><button class="nv">▶</button><svg viewBox="0 0 14 24"><path class="tabw" d="M0 0h14v24h-4z"/><path class="tabl" d="M2 0l9 24"/></svg><button class="st">Sheet1</button><svg viewBox="0 0 14 24"><path class="tabw" d="M0 0h12L4 24H0z"/><path class="tabl" d="M12 0L3 24"/></svg><span class="rest"></span></div>
</div>
</article>

<article class="win book2">
<header class="wt short"><svg><use href="#book"/></svg><h2>Book2 - Sample 2</h2></header>
<div class="sheet">
<div class="grid">
<table>
<colgroup><col class="c0"><col class="c1"><col class="c2"><col class="c3"><col class="c4"><col class="c5"></colgroup>
<tr class="hd"><th></th><th>Tc(X)</th><th>P(Y)</th><th>Ta(Y)</th><th>Err(yEr-)</th><th>DTc(Y)</th></tr>
<tr class="y"><th>长名称</th><td>Transition</td><td>Deposition</td><td>Annealing</td><td>Error</td><td>Differential</td></tr>
<tr class="y"><th>单位</th><td>Temperature (K)</td><td>Pressure (Torr)</td><td>Temperature (°C)</td><td></td><td>Temperature (K)</td></tr>
<tr><th>3</th><td>90.48217</td><td></td><td></td><td></td><td></td></tr>
<tr><th>4</th><td>90.66314</td><td></td><td></td><td></td><td></td></tr>
<tr><th>5</th><td>90.5218</td><td></td><td></td><td></td><td></td></tr>
<tr><th>6</th><td>90.60147</td><td></td><td></td><td></td><td></td></tr>
<tr><th class="sel">7</th><td>90.57326</td><td></td><td></td><td></td><td></td></tr>
</table>
<div class="gap"></div>
</div>
<div class="strip"><button class="nv">◀</button><button class="nv">▶</button><svg viewBox="0 0 14 24"><path class="tabw" d="M0 0h14v24h-4z"/><path class="tabl" d="M2 0l9 24"/></svg><button class="st">Sheet1</button><svg viewBox="0 0 14 24"><path class="tabw" d="M0 0h12L4 24H0z"/><path class="tabl" d="M12 0L3 24"/></svg><span class="rest"></span></div>
</div>
</article>

<article class="win book3">
<header class="wt"><svg><use href="#book"/></svg><h2>Book3 - Sample 3</h2></header>
<div class="sheet">
<div class="grid">
<table>
<colgroup><col class="c0"><col class="c1"><col class="c2"><col class="c3"><col class="c4"><col class="c5"></colgroup>
<tr class="hd"><th></th><th class="sel">Tc(X)</th><th>P(Y)</th><th>Ta(Y)</th><th>Err(yEr-)</th><th>DTc(Y)</th></tr>
<tr class="y"><th>长名称</th><td>Transition</td><td>Deposition</td><td>Annealing</td><td>Error</td><td>Differential</td></tr>
<tr class="y"><th>单位</th><td>Temperature (K)</td><td>Pressure (Torr)</td><td>Temperature (°C)</td><td></td><td>Temperature (K)</td></tr>
<tr class="mv"><th>1</th><td>90.42318</td><td>0.03</td><td>—</td><td>—</td><td>—</td></tr>
<tr class="mv"><th class="sel">2</th><td class="cur">90.5127</td><td>0.05</td><td>—</td><td>—</td><td>—</td></tr>
<tr class="mv"><th>3</th><td>90.66853</td><td>0.06</td><td>—</td><td>—</td><td>—</td></tr>
<tr class="mv"><th>4</th><td>90.5455</td><td>0.08</td><td>—</td><td>—</td><td>—</td></tr>
<tr class="mv"><th>5</th><td>90.42127</td><td>1.13</td><td>—</td><td>—</td><td>—</td></tr>
<tr><th></th><td></td><td></td><td></td><td></td><td></td></tr>
</table>
<div class="gap"></div>
<div class="vs end"><i class="down"></i><i class="dbl"></i></div>
</div>
<div class="strip"><button class="nv">◀</button><button class="nv">▶</button><svg viewBox="0 0 14 24"><path class="tabw" d="M0 0h14v24h-4z"/><path class="tabl" d="M2 0l9 24"/></svg><button class="st">Sheet1</button><svg viewBox="0 0 14 24"><path class="tabw" d="M0 0h12L4 24H0z"/><path class="tabl" d="M12 0L3 24"/></svg><span class="rest"></span><div class="hs"><i class="lt"></i><i class="ht"></i><i class="rt"></i></div><div class="sz"></div></div>
</div>
</article>

<article class="win graphw">
<header class="wt"><svg><use href="#graph"/></svg><h2 class="gt">3Ys Y-YY *</h2><div class="wb"><button><svg viewBox="0 0 18 16"><path d="M1 7h16v6H1z"/></svg></button><button><svg viewBox="0 0 18 16"><path d="M2 1h14v13H2zM6 5h6v5H6z"/></svg></button><button><svg viewBox="0 0 18 16"><path d="M1 1h4l4 4 4-4h4l-5 7 5 7h-4l-4-4-4 4H1l5-7z"/></svg></button></div></header>
<div class="page">
<div class="layers"><button>1</button><button>2</button><button class="cur3">3</button></div>
<svg class="plot" viewBox="1194 238 831 556">
<text class="big" x="1239" y="263">Characteristics of Samples Grown Under Different Conditions</text>
<g class="ax"><path d="M1250 306H1859M1250 698H1859"/><path d="M1367 306v7M1466 306v7M1564 306v7M1662 306v7M1762 306v7M1417 306v4M1515 306v4M1614 306v4M1712 306v4M1810 306v4M1367 698v6M1466 698v6M1564 698v6M1662 698v6M1762 698v6M1417 698v3M1515 698v3M1614 698v3M1712 698v3M1810 698v3"/></g>
<g class="tk"><text x="1367" y="297">92</text><text x="1466" y="297">90</text><text x="1564" y="297">88</text><text x="1662" y="297">86</text><text x="1762" y="297">84</text><text x="1367" y="724">92</text><text x="1466" y="724">90</text><text x="1564" y="724">88</text><text x="1662" y="724">86</text><text x="1762" y="724">84</text></g>
<text class="lb" x="1618" y="746">Transition Temperature (K)</text>
<path class="ra" d="M1859 306V698M1859 371h7M1859 502h7M1859 632h7M1859 306h2M1859 436h2M1859 567h2M1859 698h2"/>
<g class="tk red"><text x="1883" y="377">790</text><text x="1883" y="508">780</text><text x="1883" y="638">770</text></g>
<text class="lb red" transform="translate(1907 502) rotate(-90)">Annealing Temperature (°C)</text>
<path class="ba" d="M1935 306h-7V698h7M1928 371h7M1928 436h7M1928 502h7M1928 567h7M1928 632h7M1928 339h4M1928 404h4M1928 469h4M1928 534h4M1928 600h4M1928 665h4"/>
<g class="tk blue"><text x="1944" y="312">6</text><text x="1944" y="377">5</text><text x="1944" y="442">4</text><text x="1944" y="508">3</text><text x="1944" y="573">2</text><text x="1944" y="638">1</text><text x="1944" y="704">0</text></g>
<text class="lb blue" transform="translate(1972 489) rotate(-90)">ΔT<tspan dy="4" font-size="12">c</tspan><tspan dy="-4"> (K)</tspan></text>
<path class="kf" d="M1633 327h131v69h-131z"/><path class="lgd" d="M1627 321h132v70h-132z"/>
<path class="gtri" d="M1648 324l6 11h-12z"/><path class="rsq" d="M1644 349h8v8h-8z"/><path class="bl" d="M1627 376h15M1654 376h13"/><circle class="bd" cx="1648" cy="376" r="4"/>
<g class="lg"><text x="1678" y="338">As Grown</text><text x="1678" y="361">Annealed</text><text x="1678" y="382">ΔT<tspan dy="6" font-size="14">c</tspan></text></g>
<path class="gtri" d="M1449 335l6 12h-12zM1436 346l6 12h-12zM1451 353l6 12h-12zM1439 364l6 12h-12zM1439 377l6 12h-12zM1455 401l6 12h-12zM1446 419l6 12h-12zM1433 520l6 12h-12zM1436 538l6 12h-12zM1428 561l6 12h-12zM1439 581l6 12h-12zM1430 600l6 12h-12zM1433 624l6 12h-12zM1436 656l6 12h-12z"/>
<path class="eb" d="M1474 471v51M1507 565v65M1546 643v39M1584 595v51M1625 574v65M1672 514v66M1717 463v40M1767 421v58M1470 471h8M1470 522h8M1503 565h8M1503 630h8M1542 643h8M1542 682h8M1580 595h8M1580 646h8M1621 574h8M1621 639h8M1668 514h8M1668 580h8M1713 463h8M1713 503h8M1763 421h8M1763 479h8"/>
<path class="rsq" d="M1470 493h9v9h-9zM1503 595h9v9h-9zM1542 660h9v9h-9zM1580 618h9v9h-9zM1621 604h9v9h-9zM1668 544h9v9h-9zM1713 480h9v9h-9zM1763 447h9v9h-9z"/>
<path class="bl" d="M1473 444C1484 470 1499 495 1514 504C1526 511 1536 513 1546 517C1560 521 1572 527 1583 535C1598 544 1612 552 1624 566C1640 584 1656 604 1674 612C1690 624 1700 627 1717 630L1767 642"/>
<g class="bd"><circle cx="1473" cy="444" r="4"/><circle cx="1507" cy="508" r="4"/><circle cx="1546" cy="516" r="4"/><circle cx="1583" cy="535" r="4"/><circle cx="1624" cy="564" r="4"/><circle cx="1672" cy="617" r="4"/><circle cx="1717" cy="630" r="4"/><circle cx="1767" cy="642" r="4"/></g>
</svg>
</div>
</article>

<section class="dialog" role="dialog" aria-label="选择工作簿">
<h2>选择工作簿</h2>
<div class="dbody">
<ul class="list"><li>[Book2 - Sample 2]</li><li>[Book3 - Sample 3]</li></ul>
<div class="form">
<label for="f1">用...来匹配绘图列</label><div class="dc w1"><select id="f1"><option>列索引</option></select></div>
<label for="f2">用...来匹配工作表</label><div class="dc w1"><select id="f2"><option>索引</option></select></div>
<label for="f3">用...来匹配修饰符</label><div class="dc w3"><select id="f3"><option>&lt;偏移&gt;</option></select></div>
<label for="f4">图形短名称</label><div class="pair"><div class="dc edit"><input id="f4" value="&lt;auto&gt;"></div><button class="more" aria-label="更多"></button></div>
<label for="f5">图形长名称</label><div class="pair"><div class="dc edit"><input id="f5" value="%(1, @WL)"></div><button class="more hot" aria-label="更多"></button></div>
<div class="acts"><button class="ok">确定</button><button>取消</button></div>
</div>
</div>
<svg class="cursor" viewBox="0 0 18 28"><path d="M1 1v21l5-5 4 9 4-2-4-8h7z" fill="#fff" stroke="#333" stroke-width="1"/></svg>
</section>
</div>

<div class="bar bottom">
<div class="seg"><span class="grip s"></span>
<button class="b"><svg><use href="#line"/></svg></button><button class="a k n14"><svg><use href="#dd"/></svg></button><button class="b"><svg><use href="#scat"/></svg></button><button class="a k n14"><svg><use href="#dd"/></svg></button><button class="b"><svg><use href="#linesym"/></svg></button><button class="a k n14"><svg><use href="#dd"/></svg></button><button class="b"><svg><use href="#cols"/></svg></button><button class="a k n14"><svg><use href="#dd"/></svg></button><button class="b"><svg><use href="#multi"/></svg></button><button class="a k n14"><svg><use href="#dd"/></svg></button><button class="b l"><svg><use href="#box"/></svg></button><button class="a k n14"><svg><use href="#dd"/></svg></button><button class="b"><svg><use href="#area"/></svg></button><button class="a k n14"><svg><use href="#dd"/></svg></button><button class="b"><svg><use href="#polar"/></svg></button><button class="a k n14"><svg><use href="#dd"/></svg></button><button class="b"><svg><use href="#stock"/></svg></button><button class="a k n14"><svg><use href="#dd"/></svg></button><button class="b"><svg><use href="#tmpl"/></svg></button><button class="o"><svg><use href="#ovf"/></svg></button></div>
<div class="seg"><span class="grip s"></span>
<button class="b"><svg><use href="#c3d"/></svg></button><button class="a k n14"><svg><use href="#dd"/></svg></button><i class="sep"></i><button class="b"><svg><use href="#surf"/></svg></button><button class="a k n14"><svg><use href="#dd"/></svg></button><button class="b"><svg><use href="#p3d"/></svg></button><button class="a k n14"><svg><use href="#dd"/></svg></button><button class="b"><svg><use href="#cont"/></svg></button><button class="a k n14"><svg><use href="#dd"/></svg></button><button class="b"><svg><use href="#prof"/></svg></button><button class="a k n14"><svg><use href="#dd"/></svg></button><button class="b"><svg><use href="#imgp"/></svg></button><button class="o"><svg><use href="#ovf"/></svg></button></div>
<div class="seg"><span class="grip"></span>
<button class="b"><svg><use href="#shield"/></svg></button><button class="b"><svg><use href="#shx"/></svg></button><i class="sep"></i><button class="b"><svg><use href="#shf"/></svg></button><button class="b"><svg><use href="#rngs"/></svg></button><button class="b"><svg><use href="#rngs"/></svg></button><i class="sep"></i><button class="b"><svg><use href="#rngs"/></svg></button><button class="o"><svg><use href="#ovf"/></svg></button></div>
<div class="seg"><span class="grip"></span>
<button class="b"><svg><use href="#rotl"/></svg></button><button class="b"><svg><use href="#rotl"/></svg></button><button class="b"><svg><use href="#skew"/></svg></button><button class="b"><svg><use href="#skewr"/></svg></button><button class="b"><svg><use href="#trap"/></svg></button><button class="b"><svg><use href="#trapd"/></svg></button><button class="b"><svg><use href="#trapb"/></svg></button><button class="b"><svg><use href="#sq2"/></svg></button><button class="b"><svg><use href="#expand"/></svg></button><button class="b"><svg><use href="#cub"/></svg></button><button class="b"><svg><use href="#cub2"/></svg></button>
<label class="combo size"><select aria-label="角度"><option>10</option></select></label><button class="o"><svg><use href="#ovf"/></svg></button></div>
</div>
</section>

<aside class="tools right">
<div class="pane"><span class="hgrip"></span>
<div class="rows"><button class="v"><svg><use href="#stairs"/></svg></button></div>
<div class="rows"><button class="v l"><svg><use href="#ax1"/></svg></button></div>
<div class="rows"><button class="v l"><svg><use href="#ax2"/></svg></button></div>
<div class="rows"><button class="v l"><svg><use href="#ax3"/></svg></button></div>
<div class="rows"><button class="v"><svg><use href="#xy"/></svg></button></div>
<div class="rows"><button class="v on"><svg><use href="#runner"/></svg></button></div>
<i class="hsep"></i>
<div class="rows"><button class="v"><svg><use href="#lay1"/></svg></button></div>
<div class="rows"><button class="v"><svg><use href="#lay2"/></svg></button></div>
<div class="rows"><button class="v"><svg><use href="#lay3"/></svg></button></div>
<div class="rows"><button class="v"><svg><use href="#cascade"/></svg></button><button class="a k"><svg><use href="#dd"/></svg></button></div>
<i class="hsep"></i>
<div class="rows"><button class="v"><svg><use href="#corner"/></svg></button></div>
<div class="rows"><button class="v"><svg><use href="#cortop"/></svg></button></div>
<div class="rows"><button class="v"><svg><use href="#corright"/></svg></button></div>
<div class="rows"><button class="v"><svg><use href="#corbox"/></svg></button></div>
<div class="rows"><button class="v"><svg><use href="#corin"/></svg></button></div>
<div class="rows"><button class="v"><svg><use href="#corin"/></svg></button></div>
<button class="vo"><svg><use href="#ovs"/></svg></button></div>
<div class="pane narrow"><span class="hgrip"></span>
<button class="v"><svg><use href="#al1"/></svg></button><button class="v"><svg><use href="#al2"/></svg></button><i class="hsep"></i><button class="v"><svg><use href="#al3"/></svg></button><button class="v"><svg><use href="#al4"/></svg></button><i class="hsep"></i><button class="v"><svg><use href="#al5"/></svg></button><button class="v"><svg><use href="#al6"/></svg></button><i class="hsep"></i><button class="v"><svg><use href="#al7"/></svg></button>
<button class="vo"><svg><use href="#ovs"/></svg></button></div>
</aside>
<aside class="tabs rtabs"><button class="r1">Apps</button><button class="r2">对象管理器</button></aside>
</div>

<footer class="status"><span class="help">按F1键打开帮助文档</span><span class="dd2">--</span><i class="flag"></i><span class="au">AU : 开</span><span>Candy Colors &amp; Light Grids</span><span>1:[Book1]Sheet1!Col("Differential")[1:22]</span><span>3:[Graph9]3!1</span><span class="rad">弧度</span></footer>
</main>
<div class="gutter rg"><a href="https://blog.csdn.net/Temmie1024">https://blog.csdn.net/Temmie1024</a></div>

<p class="dan d1">有安装包吗？只是听太空洞了</p>
<p class="dan d2">看置顶视频申请安装学习版</p>
<p class="wm"><b>bilibili</b><span>BV1f7411T7mP P1 00:01:18/00:02:20</span></p>
</div>
</body>
</html>
```
FILE: styles.css
```css
* { box-sizing: border-box; }
html, body { margin: 0; height: 100%; overflow: hidden; background: #000; }
body { font-family: "Noto Sans", "Noto Sans CJK SC", sans-serif; color: #111; }
button, input, select { font: inherit; color: inherit; margin: 0; padding: 0; border: 0; background: none; border-radius: 0; }
select { appearance: none; outline: 0; }
h1, h2, p, ul { margin: 0; padding: 0; font-weight: normal; list-style: none; }
svg { fill: none; stroke: currentColor; stroke-width: 2; display: block; }
.defs { position: absolute; width: 0; height: 0; }

.w { fill: #f4f4f8; }
.h { fill: #b2b3b9; }
.hf { fill: #9a9ba2; stroke: none; }
.f { fill: currentColor; stroke: none; }
.l { stroke: #b0b1b8; }
.wf { fill: #fff; stroke: none; }
.kf { fill: #000; stroke: none; }
.bf { fill: #00128c; stroke: none; }
.wk { fill: #fff; stroke: #111; }
.k { stroke: #000; }
.r { stroke: #d0101c; }
path.b { stroke: #0a12d0; stroke-width: 3; }
.y { fill: #f2d43c; stroke: #8a7418; }
.ybox { fill: #fff; stroke: #8a7418; }
.c { fill: #52d8e4; stroke: #1c5a80; }
.g { fill: #16c428; stroke: #0c8018; stroke-width: 1; }
.gl { fill: #7fe09a; stroke: none; }
.gg { stroke: #1a5040; stroke-width: 1; }
.ic { font: 20px "Liberation Serif", serif; fill: currentColor; stroke: none; }
.fb { font-weight: bold; }
.fi { font-weight: bold; font-style: italic; }
.s { font-size: 11px; }
.xl { font-size: 28px; font-weight: bold; }

.screen { display: flex; height: 100vh; position: relative; overflow: hidden; }
.gutter { flex: 0 0 218px; background: #000; }
.rg { flex-basis: 252px; display: flex; align-items: flex-end; padding: 0 0 9px 3px; }
.rg a { color: #ddd; font-size: 15px; line-height: 22px; text-decoration: none; white-space: nowrap; }
.app { flex: 1; min-width: 0; height: calc(100vh + 10px); display: flex; flex-direction: column; background: #eceefa; overflow: hidden; }

.title { flex: 0 0 35px; background: #fff; display: flex; align-items: flex-start; padding-left: 12px; }
.logo { width: 25px; height: 24px; }
.title h1 { font-size: 19px; line-height: 24px; color: #8c8c8c; margin-left: 8px; flex: 1; white-space: nowrap; }
.winctl { display: flex; }
.winctl button { width: 69px; height: 24px; display: flex; align-items: center; justify-content: center; }
.winctl svg { width: 16px; height: 16px; stroke: #888; stroke-width: 1; }

.menu { flex: 0 0 36px; background: #f2f2f7; display: flex; align-items: center; gap: 22px; }
.menu .grip { margin-right: -12px; }
.menu button { font-size: 20px; line-height: 30px; color: #000; white-space: nowrap; }
.menu small { font-size: 16px; }

.grip { flex: 0 0 16px; height: 26px; background: radial-gradient(circle, #a0a2ac 1px, transparent 2px) 50% 0 / 5px 6px repeat-y; }
.grip.s { flex-basis: 12px; }
.bar { flex: 0 0 39px; display: flex; background: #eceefa; border-bottom: 1px solid #dcdde8; }
.bar + .bar { flex-basis: 40px; }
.seg { flex: none; display: flex; align-items: center; background: linear-gradient(#fafaff, #eeeef5 40%, #b6b8c2 92%, #a8aab4); border-radius: 0 4px 4px 0; color: #7a7b81; }
.seg.fill { flex: 1; }
.b { flex: 0 0 33px; height: 30px; display: flex; align-items: center; justify-content: center; }
.b svg { width: 24px; height: 24px; }
.b.l { color: #a5a6ad; }
.v { flex: 0 0 33px; width: 34px; height: 33px; display: flex; align-items: center; justify-content: center; color: #76777d; }
.v svg { width: 24px; height: 24px; }
.v.l { color: #a2a3aa; stroke: inherit; }
.v.on { background: #d3e8fb; border: 2px solid #4aa3ef; }
.a { flex: 0 0 15px; height: 30px; display: flex; align-items: center; justify-content: center; color: #85868d; }
.a svg { width: 9px; height: 6px; flex: none; }
.a.k { color: #000; }
.a.n { flex-basis: 12px; }
.a.n14 { flex-basis: 14px; }
.a.w20 { flex-basis: 20px; }
.sep { flex: 0 0 12px; height: 14px; align-self: flex-start; margin-top: 8px; background: linear-gradient(#b8b9c2, #b8b9c2) 50% 0 / 1px 100% no-repeat; }
.sep.wide { flex-basis: 18px; }
.o { flex: 0 0 16px; align-self: stretch; margin-left: 5px; background: linear-gradient(#b8b9c4, #cfd0da 50%, #f4f5fc 70%); display: flex; flex-direction: column; justify-content: flex-end; align-items: center; padding-bottom: 6px; color: #000; border-radius: 0 4px 4px 0; }
.o svg { width: 9px; height: 9px; }
.o.end { margin-left: auto; justify-content: space-between; padding-top: 9px; }
.o .cv { height: 7px; }

.zoom { flex: 0 0 90px; padding: 0 4px 0 5px; position: relative; }
.zoom select { width: 100%; height: 28px; background: #fff; color: #000; font: 16px "Liberation Sans", sans-serif; padding-left: 5px; }
.zoom::after, .combo::after { content: ""; position: absolute; right: 9px; top: 12px; border: 5px solid transparent; border-top: 6px solid #777; border-bottom: 0; }
.zoom::after { border-top-color: #000; }
.combo { flex: none; height: 29px; margin: 0 4px; border: 1px solid #9a9ba4; background: #f5f5f8; position: relative; display: flex; align-items: center; color: #808187; font-size: 18px; }
.combo select { flex: 1; width: 100%; height: 27px; padding-left: 4px; }
.combo.font { width: 188px; font-size: 20px; }
.tt { width: 22px; height: 24px; margin: 0 2px 0 8px; }
.combo.size { width: 86px; }
.combo.size select { font-family: "Liberation Sans", sans-serif; }
.combo.fillc { width: 71px; }
.combo.dash select { background: linear-gradient(#111, #111) 6px 50% / 50px 2px no-repeat; }

.mid { flex: 1; min-height: 0; display: flex; }
.tabs { flex: 0 0 33px; display: flex; flex-direction: column; align-items: flex-start; background: #e9ebf2; }
.tabs button { writing-mode: vertical-rl; text-orientation: sideways; width: 29px; font-size: 18px; line-height: 24px; color: #555; text-align: left; padding-top: 12px; background: #f0f0f2; border: 1px solid #d6d7df; border-left: 0; font-family: "Noto Sans CJK SC", sans-serif; white-space: nowrap; display: block; }
.tabs .t1 { height: 174px; }
.tabs .t2 { height: 137px; padding-top: 27px; }
.tabs .t3 { height: 208px; padding-top: 27px; color: #e3141e; }
.tabs .t4 { height: 172px; padding-top: 28px; }
.rtabs { flex-basis: 32px; align-items: flex-end; background: #e6ebfa; gap: 26px; }
.rtabs .r1 { height: 86px; font-size: 17px; }
.rtabs .r2 { height: 127px; padding-top: 0; }

.tools { flex: 0 0 55px; display: flex; flex-direction: column; background: #e9ebf8; }
.tools.right { flex-basis: 58px; padding-left: 7px; }
.pane { width: 51px; display: flex; flex-direction: column; background: linear-gradient(90deg, #fafaff, #ededf4 45%, #b4b6c2 92%, #a8aab6); border-radius: 0 0 4px 0; }
.pane.narrow { flex: 1; width: 38px; }
.hgrip { flex: 0 0 14px; width: 34px; margin-left: 5px; background: radial-gradient(circle, #a0a2ac 1px, transparent 2px) 0 50% / 6px 5px repeat-x; }
.stack { height: 634px; display: flex; flex-direction: column; justify-content: space-between; }
.stack div, .rows { display: flex; align-items: center; height: 33px; }
.stack .v, .rows .v { flex: 0 0 34px; height: 33px; }
.hsep { flex: 0 0 13px; background: linear-gradient(#c2c3cc, #c2c3cc) 6px 50% / 24px 1px no-repeat; }
.vo { height: 20px; display: flex; align-items: center; justify-content: flex-end; padding-right: 4px; color: #000; }
.vo svg { width: 9px; height: 9px; }
.narrow .vo { margin-top: auto; }
.tools .a { flex-basis: 12px; }

.center { flex: 1; min-width: 0; display: flex; flex-direction: column; }
.mdi { flex: 1; min-height: 0; position: relative; background: #a9aaa9; overflow: hidden; border-top: 1px solid #777a82; }
.win { position: absolute; background: linear-gradient(#c6ced6, #d3dcee 50px, #dbe2f3); border: 1px solid #4c525c; border-radius: 7px 7px 0 0; padding: 0 15px 14px 11px; display: flex; flex-direction: column; }
.book1 { left: 3px; top: 2px; width: 869px; height: 291px; }
.book2 { left: 4px; top: 292px; width: 869px; height: 269px; border-radius: 0; padding-bottom: 1px; }
.book3 { left: 4px; top: 560px; width: 869px; height: 299px; }
.graphw { left: 874px; top: 5px; width: 867px; height: 652px; padding: 0 15px 13px 10px; }
.wt { flex: 0 0 48px; display: flex; align-items: center; padding-top: 8px; }
.wt.short { flex-basis: 35px; padding: 0 0 4px; }
.wt > svg { width: 24px; height: 24px; }
.wt h2 { flex: 1; font-size: 18px; line-height: 26px; color: #a2a8b2; margin-left: 9px; white-space: nowrap; }
.wt .gt { font-size: 17px; }
.wb { display: flex; gap: 5px; }
.wb button { width: 47px; height: 26px; border: 1px solid #8b97aa; border-radius: 2px; display: flex; align-items: center; justify-content: center; background: #cdd7e6; }
.wb svg { width: 18px; height: 16px; stroke: #66707e; fill: #f4f6fa; }

.sheet { flex: 1; min-height: 0; display: flex; flex-direction: column; border: 1px solid #333; border-width: 1px 0 0 1px; background: #fff; font: 15px "Liberation Mono", "Noto Sans CJK SC", monospace; }
.grid { flex: 1; min-height: 0; overflow: hidden; display: flex; align-items: stretch; background: #d9d9dc; }
table { flex: none; align-self: flex-start; width: 793px; table-layout: fixed; border-collapse: separate; border-spacing: 0; }
.c0 { width: 130px; }
.c1 { width: 142px; }
.c2 { width: 133px; }
.c3 { width: 143px; }
.c4 { width: 101px; }
.c5 { width: 144px; }
th, td { height: 24px; padding: 0 9px 0 0; line-height: 20px; text-align: right; white-space: nowrap; overflow: hidden; border: 0 solid #b4b4b4; border-width: 0 1px 1px 0; background: #fff; font-size: 15px; font-weight: normal; color: #000; }
th { background: #e0dfe1; border-color: #222; font-size: 16px; padding-right: 10px; }
th:first-child { border-right-width: 2px; }
tr.y th:first-child { font-size: 18px; }
.hd th { height: 36px; text-align: center; padding: 0; font-size: 15px; }
th.sel { background: #b3b9ce; font-weight: bold; }
.y td { background: #fbf9c4; text-align: center; padding: 0; }
.mv td:nth-child(n+4) { font-family: "Liberation Sans", sans-serif; font-size: 17px; }
td.cur { box-shadow: inset 0 0 0 2px #111; }
.gap { flex: 1; }
.vs { flex: 0 0 26px; background: #f1f1f1; display: flex; flex-direction: column; align-items: center; padding-top: 12px; }
.up { width: 9px; height: 9px; border: solid #555; border-width: 2px 0 0 2px; transform: rotate(45deg); }
.thumb { width: 24px; height: 24px; background: #cdcdcd; margin-top: 8px; }
.vs.end { justify-content: flex-end; padding: 0; }
.down { width: 9px; height: 9px; border: solid #555; border-width: 0 2px 2px 0; transform: rotate(45deg); }
.dbl { width: 26px; height: 8px; border: solid #222; border-width: 2px 0; margin-top: 10px; }
.strip { flex: 0 0 24px; display: flex; align-items: stretch; background: #c8c8cb; }
.strip .nv { width: 26px; background: #eee; border: 1px solid #999; color: #666; font: 12px/20px "DejaVu Sans", sans-serif; }
.strip > svg { width: 14px; height: 24px; }
.tabw { fill: #fff; stroke: none; }
.tabl { stroke: #000; }
.st { background: #fff; font: bold 22px/24px "Liberation Mono", monospace; padding: 0 1px; color: #000; }
.rest { flex: 1; border-top: 2px solid #222; border-right: 2px solid #222; }
.hs { flex: 0 0 212px; display: flex; align-items: center; justify-content: space-between; padding: 0 10px; margin-left: 6px; background: #f1f1f1; border: solid #222; border-width: 0 2px; }
.lt, .rt { width: 9px; height: 9px; border: solid #555; border-width: 0 0 2px 2px; transform: rotate(45deg); }
.rt { border-width: 2px 2px 0 0; }
.ht { flex: 0 0 156px; height: 24px; background: #cdcdcd; }
.sz { flex: 0 0 28px; margin-left: 4px; background: #f1f1f1; border-left: 2px solid #222; }

.page { flex: 1; min-height: 0; background: #fff; border: 2px solid #6e747e; border-width: 2px 0 0 2px; border-right: 7px solid #c3c5c8; display: flex; flex-direction: column; }
.layers { flex: 0 0 30px; display: flex; gap: 3px; padding-left: 3px; }
.layers button { width: 27px; background: #b9bab8; color: #fff; font: bold 20px/26px "Liberation Sans", sans-serif; border: solid #8c8d8c; border-width: 0 2px 2px 0; }
.layers .cur3 { width: 29px; color: #000; background: #b9b9c2; border: 0; }
.plot { width: 831px; height: 556px; font-family: "Liberation Mono", monospace; }
.plot text { stroke: none; fill: #111; }
.big { font-size: 22px; }
.tk text { font: 15px "Liberation Sans", sans-serif; text-anchor: middle; }
.lb { font-size: 16px; text-anchor: middle; }
.lg text { font-size: 16px; }
.plot .red, .plot .red text { fill: #d8121c; }
.plot .blue, .plot .blue text { fill: #1410d0; }
.ax { stroke: #111; }
.ra { stroke: #d8121c; }
.ba { stroke: #1410d0; }
.bl { stroke: #1410d0; stroke-width: 1; }
.bd { fill: #0d08e8; stroke: #0d08e8; stroke-width: 1; }
.lgd { fill: #fff; stroke: #000; }
.gtri { fill: #0f860f; stroke: none; }
.rsq { fill: #e3060e; stroke: none; }
.eb { stroke: #111; }

.dialog { position: absolute; left: 255px; top: 125px; width: 794px; height: 626px; border: 2px solid #4288c8; background: #f0f0f0; box-shadow: 4px 6px 16px rgba(0, 0, 0, .45); font: 18px "Liberation Mono", "Noto Sans CJK SC", monospace; color: #000; }
.dialog h2 { height: 37px; background: #fff; font: 18px/32px "Noto Sans CJK SC", sans-serif; padding-left: 3px; }
.dbody { padding: 9px 7px 0 6px; }
.list { height: 370px; border: 1px solid #82878f; background: #fff; padding: 2px; font-size: 15px; line-height: 20px; }
.list li { background: #3399ff; color: #fff; padding-left: 3px; height: 18px; }
.form { margin-top: 17px; padding-left: 3px; display: grid; grid-template-columns: 201px 357px 1fr; grid-auto-rows: 30px; row-gap: 9px; }
.form label { grid-column: 1; line-height: 30px; white-space: nowrap; }
.dc { grid-column: 2; height: 30px; border: 1px solid #adadad; background: #e1e1e1; position: relative; display: flex; }
.dc select, .dc input { flex: 1; width: 100%; min-width: 0; padding-left: 5px; outline: 0; }
.dc input { font-size: 15px; }
.dc::after { content: ""; position: absolute; right: 10px; top: 8px; width: 8px; height: 8px; border: solid #666; border-width: 0 2px 2px 0; transform: rotate(45deg); }
.w1 { width: 221px; }
.w3 { grid-column: 2 / 4; width: 408px; }
.pair { grid-column: 2; display: flex; gap: 4px; }
.edit { flex: 1; background: #fff; border-color: #6e6e6e; }
.more { width: 36px; height: 29px; border: 1px solid #adadad; background: #e1e1e1; display: flex; align-items: center; justify-content: center; }
.more::after { content: ""; width: 8px; height: 8px; border: solid #333; border-width: 1px 1px 0 0; transform: rotate(45deg); }
.more.hot { border-bottom: 3px solid #6cb4f0; }
.acts { grid-column: 3; grid-row: 4 / 6; align-self: end; display: flex; gap: 14px; justify-content: flex-end; margin: 0 2px 8px 0; }
.acts button { width: 88px; height: 29px; border: 1px solid #adadad; background: #e1e1e1; font-size: 18px; line-height: 24px; }
.acts .ok { border: 2px solid #3c90dc; background: linear-gradient(#e4f0fa, #cfe5f8); }
.cursor { position: absolute; left: 629px; top: 599px; width: 18px; height: 28px; }

.bottom { flex-basis: 44px; background: #f0f1fb; border-top: 3px solid #f0f1fb; }

.status { flex: 0 0 31px; background: #efefef; display: flex; align-items: center; font-size: 16px; line-height: 30px; color: #222; padding: 0 28px 0 7px; white-space: nowrap; gap: 10px; }
.status .help { flex: 1; font-size: 19px; }
.status span + span, .status .au { border-left: 1px solid #c8c8c8; padding-left: 6px; }
.status .dd2 { border: 0; }
.flag { width: 12px; height: 12px; background: #f40a0a; }
.status .rad { font-size: 20px; }

.dan { position: absolute; font: bold 42px/52px "Noto Sans CJK SC", sans-serif; color: rgba(255, 255, 255, .6); -webkit-text-stroke: 1px rgba(125, 125, 130, .75); white-space: nowrap; }
.d1 { left: 308px; top: -3px; }
.d2 { left: 458px; top: 54px; }
.wm { position: absolute; left: 22px; bottom: 10px; display: flex; align-items: center; gap: 12px; white-space: nowrap; color: rgba(255, 255, 255, .36); font-size: 32px; line-height: 44px; }
.wm b { font: bold 33px/44px "Liberation Sans", sans-serif; width: 95px; }
```
